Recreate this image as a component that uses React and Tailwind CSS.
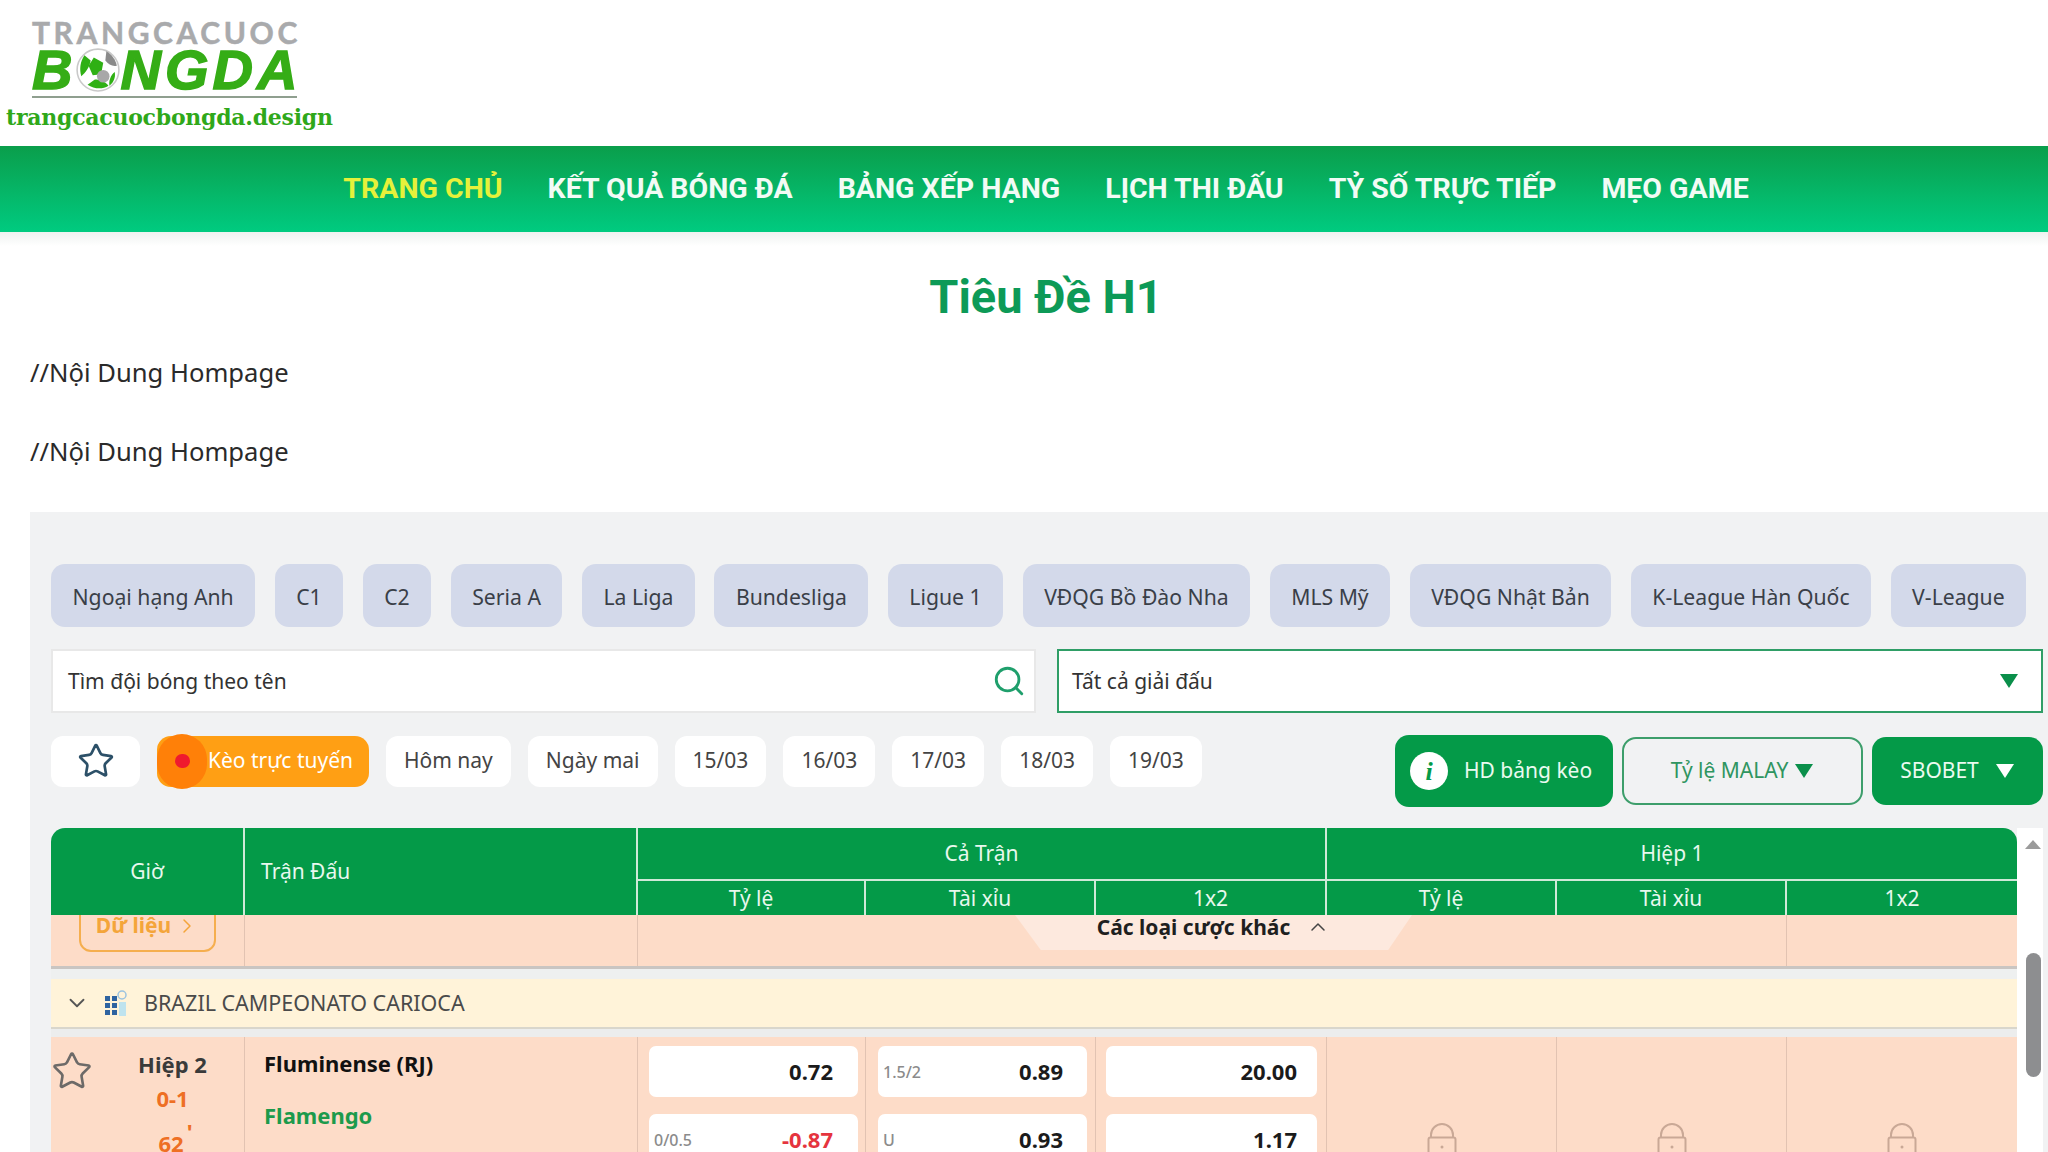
import React from 'react';
import { ChevronDown, ChevronRight, ChevronUp, Search, Star } from 'lucide-react';

const navItems = ['TRANG CHỦ', 'KẾT QUẢ BÓNG ĐÁ', 'BẢNG XẾP HẠNG', 'LỊCH THI ĐẤU', 'TỶ SỐ TRỰC TIẾP', 'MẸO GAME'];
const leagues = ['Ngoại hạng Anh', 'C1', 'C2', 'Seria A', 'La Liga', 'Bundesliga', 'Ligue 1', 'VĐQG Bồ Đào Nha', 'MLS Mỹ', 'VĐQG Nhật Bản', 'K-League Hàn Quốc', 'V-League'];
const days = ['Hôm nay', 'Ngày mai', '15/03', '16/03', '17/03', '18/03', '19/03'];
const cols = 'grid grid-cols-[194px_393px_228px_230px_231px_230px_230px_230px]';

const Triangle = ({ className }) => (
  <svg viewBox="0 0 20 16" className={className}>
    <path d="M1 1h18L10 15z" fill="currentColor" />
  </svg>
);

const Ball = () => (
  <svg viewBox="0 0 44 44" className="w-[46px] h-[46px] shrink-0 mx-[-1px]">
    <circle cx="22" cy="22" r="20" fill="#fff" stroke="#c9c9c9" strokeWidth="1.5" />
    <path d="M9 8c-4 6-5 13-3 20 4-3 8-9 9-15z" fill="#2fb014" />
    <path d="M30 4c5 3 9 8 10 14-4 1-8-1-11-5z" fill="#8a8a8a" />
    <path d="M12 36c6 4 14 5 20 1-3-4-8-6-13-6z" fill="#2fb014" />
    <path d="M18 10l9 5-2 11-8 1-4-9z" fill="#2fb014" />
    <circle cx="27" cy="28" r="6" fill="#a8a8a8" />
    <path d="M38 24c1 5-1 10-5 13-1-4 1-10 5-13z" fill="#2fb014" />
  </svg>
);

const Logo = () => (
  <div className="w-[340px] h-[146px] shrink-0 pt-[17px] flex flex-col">
    <div className="pl-[32px] w-[320px]">
      <div className="h-[30px] flex items-center text-[#a9aaac] font-bold text-[30px] tracking-[3.600px] leading-none font-['Lato',sans-serif] [-webkit-text-stroke:0.5px_#a9aaac] whitespace-nowrap">TRANGCACUOC</div>
      <div className="h-[46px] flex items-center text-[#35ad16] font-black italic text-[56px] leading-none font-['Liberation_Sans',sans-serif] [-webkit-text-stroke:1.5px_#35ad16] tracking-[4px]">
        <span>B</span><Ball /><span>NGDA</span>
      </div>
      <div className="h-[2px] w-[265px] mt-[3px] bg-[#8f9f8f]" />
    </div>
    <div className="pl-[6px] mt-[6px] text-[#2fa81a] font-bold text-[22px] leading-[26px] font-['DejaVu_Serif',serif] tracking-[-0.25px] whitespace-nowrap">trangcacuocbongda.design</div>
  </div>
);

const Odds = ({ label, value, red, pr = 'pr-[20px]' }) => (
  <div className={`h-[51px] bg-white rounded-[7px] flex items-center justify-between pl-[5px] ${pr} mb-[17px]`}>
    <span className="text-[#8b8b8b] text-[16px] font-medium">{label}</span>
    <span className={`text-[22px] font-bold ${red ? 'text-[#e5343e]' : 'text-[#1b1b1b]'}`}>{value}</span>
  </div>
);

const Lock = () => (
  <svg viewBox="0 0 30 46" className="w-[30px] h-[46px]" fill="none" stroke="#c9a896" strokeWidth="2">
    <path d="M4 16V13a11 11 0 0 1 22 0v3" />
    <rect x="1.500" y="15.500" width="27" height="28" rx="2" />
    <circle cx="15" cy="25" r="1.500" fill="#c9a896" stroke="none" />
  </svg>
);

const LeagueIcon = () => (
  <svg viewBox="0 0 24 28" className="w-[24px] h-[28px] mr-[16px]">
    <g fill="#2f63a0">
      <rect x="1" y="7" width="5" height="5" />
      <rect x="8" y="7" width="5" height="5" />
      <rect x="1" y="14" width="5" height="5" />
      <rect x="8" y="14" width="5" height="5" />
      <rect x="1" y="21" width="5" height="5" />
      <rect x="8" y="21" width="5" height="5" />
    </g>
    <circle cx="18" cy="6" r="4" fill="none" stroke="#9cc3e0" strokeWidth="1.500" />
    <rect x="15" y="13" width="7" height="14" fill="#bfe3ee" />
  </svg>
);

const App = () => (
  <div className="w-full h-[1152px] overflow-hidden bg-white text-[#333] font-['Noto_Sans',sans-serif]">
    <Logo />

    <nav className="h-[86px] flex items-center justify-center gap-[45px] pl-[44px] bg-gradient-to-b from-[#0a9e4b] to-[#00cb80] font-['Roboto',sans-serif] font-bold text-[28.500px] text-[#f2fbf5]">
      {navItems.map((item, i) => (
        <a key={item} className={i === 0 ? 'text-[#e6f13a]' : ''}>{item}</a>
      ))}
    </nav>
    <div className="h-[14px] bg-gradient-to-b from-[#eef2f0] to-white" />

    <main className="pl-[30px]">
      <h1 className="h-[74px] mt-[14px] flex items-center justify-center pl-[14px] font-bold text-[47px] text-[#0d9a57] font-['Roboto',sans-serif]">Tiêu Đề H1</h1>
      <p className="h-[40px] mt-[19px] flex items-center text-[25.600px] text-[#2a2a2a]">//Nội Dung Hompage</p>
      <p className="h-[40px] mt-[39px] flex items-center text-[25.600px] text-[#2a2a2a]">//Nội Dung Hompage</p>

      <section className="mt-[40px] h-[700px] bg-[#f1f2f3] pl-[21px] pr-[5px] pt-[52px]">
        <div className="flex gap-[19.500px] h-[63px]">
          {leagues.map((name) => (
            <button key={name} className="px-[21.500px] pt-[2px] rounded-[14px] bg-[#d3d9ea] text-[21.200px] text-[#3a3f48] whitespace-nowrap">{name}</button>
          ))}
        </div>

        <div className="grid grid-cols-[985px_986px] gap-[21px] mt-[22px] h-[64px] text-[21px] text-[#333]">
          <div className="bg-white border-2 border-[#e8e8e8] flex items-center justify-between pl-[15px] pr-[8px]">
            <span className="pt-[2px]">Tìm đội bóng theo tên</span>
            <Search className="w-[34px] h-[34px] text-[#1f9f6c]" strokeWidth={2} />
          </div>
          <div className="bg-white border-2 border-[#2f9e66] flex items-center justify-between pl-[13px] pr-[22px]">
            <span className="pt-[2px]">Tất cả giải đấu</span>
            <Triangle className="w-[20px] h-[16px] text-[#0a8f4a]" />
          </div>
        </div>

        <div className="flex items-start justify-between mt-[22px] h-[93px]">
          <div className="flex gap-[17px] items-center h-[52px]">
            <div className="w-[89px] h-[51px] bg-white rounded-[12px] flex items-center justify-center">
              <Star className="w-[38px] h-[38px] text-[#2c5068]" strokeWidth={1.7} />
            </div>
            <div className="relative w-[212px] h-[51px] bg-[#ff9f14] rounded-[14px] flex items-center justify-end pr-[16px] text-white text-[21px]">
              <div className="absolute left-0 top-[-2px] w-[50px] h-[55px] rounded-full bg-[#ff8008] flex items-center justify-center">
                <div className="w-[15px] h-[14px] rounded-full bg-[#ef1a2e]" />
              </div>
              Kèo trực tuyến
            </div>
            {days.map((d) => (
              <div key={d} className="h-[51px] px-[18px] bg-white rounded-[12px] flex items-center text-[21px] text-[#444]">{d}</div>
            ))}
          </div>

          <div className="flex gap-[9px] items-center h-[72px] text-[21px]">
            <div className="w-[218px] h-[72px] bg-[#049a48] rounded-[14px] flex items-center pl-[15px] gap-[16px] text-[#eafaf0]">
              <div className="w-[38px] h-[38px] rounded-full bg-white flex items-center justify-center text-[#049a48] font-bold italic text-[26px] font-['Liberation_Serif',serif]">i</div>
              HD bảng kèo
            </div>
            <div className="w-[241px] h-[68px] border-2 border-[#3d9e6b] rounded-[14px] flex items-center justify-center gap-[6px] text-[#2f9560]">
              Tỷ lệ MALAY
              <Triangle className="w-[20px] h-[16px] text-[#0a8f4a]" />
            </div>
            <div className="w-[171px] h-[68px] bg-[#049a48] rounded-[14px] flex items-center justify-center gap-[16px] text-[#eafaf0]">
              SBOBET
              <Triangle className="w-[20px] h-[16px] text-white" />
            </div>
          </div>
        </div>

        <div className="flex">
          <div className="w-[1966px] shrink-0">
            <div className={`${cols} grid-rows-[53px_34px] bg-[#049a48] rounded-t-[14px] text-[#e8f8ee] text-[21px]`}>
              <div className="row-span-2 border-r-2 border-[#cfe9d8] flex items-center justify-center">Giờ</div>
              <div className="row-span-2 border-r-2 border-[#cfe9d8] flex items-center pl-[16px]">Trận Đấu</div>
              <div className="col-span-3 border-r-2 border-b-2 border-[#cfe9d8] flex items-center justify-center">Cả Trận</div>
              <div className="col-span-3 border-b-2 border-[#cfe9d8] flex items-center justify-center">Hiệp 1</div>
              {['Tỷ lệ', 'Tài xỉu', '1x2', 'Tỷ lệ', 'Tài xỉu', '1x2'].map((t, i) => (
                <div key={i} className={`flex items-center justify-center leading-none ${i < 5 ? 'border-r-2 border-[#cfe9d8]' : ''}`}>{t}</div>
              ))}
            </div>

            <div className="relative h-[238px] overflow-hidden">
              <div className={`${cols} h-[54px] bg-[#fddcc8] border-b-[3px] border-[#c9c5c2]`}>
                <div className="border-r border-[#e2c3b2] flex justify-center">
                  <div className="w-[137px] h-[57px] mt-[-20px] border-2 border-[#f5ae4e] rounded-[12px] flex items-center justify-center gap-[4px] pt-[4px] text-[#f4a53a] font-bold text-[21px] whitespace-nowrap">
                    Dữ liệu <ChevronRight className="w-[24px] h-[24px]" strokeWidth={1.5} />
                  </div>
                </div>
                <div className="border-r border-[#e2c3b2]" />
                <div className="col-span-5 border-r border-[#e2c3b2]" />
                <div />
              </div>

              {/* tab nằm đè lên hàng trên */}
              <div className="absolute left-[964px] top-0 w-[397px] h-[35px]">
                <div className="absolute inset-0 bg-[#fde9de] [clip-path:polygon(0_0,100%_0,94%_100%,6.500%_100%)]" />
                <div className="relative flex justify-center items-center gap-[16px] text-[21px] leading-[22px] font-bold text-[#1f1f1f]">
                  Các loại cược khác <ChevronUp className="w-[24px] h-[24px] text-[#444]" strokeWidth={1.5} />
                </div>
              </div>

              <div className="h-[10px] bg-[#eef0f0]" />
              <div className="h-[50px] bg-[#fff3d9] border-b-2 border-[#d9d6cc] flex items-center pl-[13px] text-[21.500px] text-[#4a4a4a]">
                <ChevronDown className="w-[26px] h-[26px] mr-[14px] text-[#555]" strokeWidth={1.7} />
                <LeagueIcon />
                BRAZIL CAMPEONATO CARIOCA
              </div>
              <div className="h-[8px] bg-[#eceded]" />

              <div className={`${cols} h-[160px] bg-[#fddcc8]`}>
                <div className="relative border-r border-[#e2c3b2] pl-[50px] pt-[9px] flex flex-col items-center text-center">
                  <Star className="absolute left-[0px] top-[13px] w-[42px] h-[42px] text-[#6d6a68]" strokeWidth={1.500} />
                  <span className="text-[22px] font-bold text-[#3a3a3a] leading-[36px]">Hiệp 2</span>
                  <span className="text-[22px] font-bold text-[#ee6f24] leading-[32px]">0-1</span>
                  <span className="text-[22px] font-bold text-[#ee6f24] leading-[48px] mt-[5px] pl-[6px]">62<sup className="text-[22px] top-[-12px] relative align-baseline pl-[3px]">'</sup></span>
                </div>
                <div className="border-r border-[#e2c3b2] pl-[19px] pt-[8px]">
                  <div className="text-[22px] font-bold text-[#111] leading-[36px]">Fluminense (RJ)</div>
                  <div className="text-[22px] font-bold text-[#1c9a4c] leading-[36px] mt-[16px]">Flamengo</div>
                </div>
                <div className="border-r border-[#e2c3b2] pl-[11px] pr-[7px] pt-[9px]">
                  <Odds value="0.72" pr="pr-[25px]" />
                  <Odds label="0/0.5" value="-0.87" red pr="pr-[25px]" />
                </div>
                <div className="border-r border-[#e2c3b2] pl-[12px] pr-[8px] pt-[9px]">
                  <Odds label="1.5/2" value="0.89" pr="pr-[24px]" />
                  <Odds label="U" value="0.93" pr="pr-[24px]" />
                </div>
                <div className="border-r border-[#e2c3b2] pl-[10px] pr-[9px] pt-[9px]">
                  <Odds value="20.00" />
                  <Odds value="1.17" />
                </div>
                {[0, 1, 2].map((i) => (
                  <div key={i} className={`flex justify-center pt-[85px] ${i < 2 ? 'border-r border-[#e2c3b2]' : ''}`}>
                    <Lock />
                  </div>
                ))}
              </div>
            </div>
          </div>

          <div className="w-[26px] bg-white flex flex-col items-center pl-[6px]">
            <div className="mt-[12px] w-0 h-0 border-l-[8px] border-r-[8px] border-b-[9px] border-l-transparent border-r-transparent border-b-[#9b9b9b]" />
            <div className="mt-[104px] w-[15px] h-[124px] rounded-full bg-[#8d8e90]" />
          </div>
        </div>
      </section>
    </main>
  </div>
);

export default App;
